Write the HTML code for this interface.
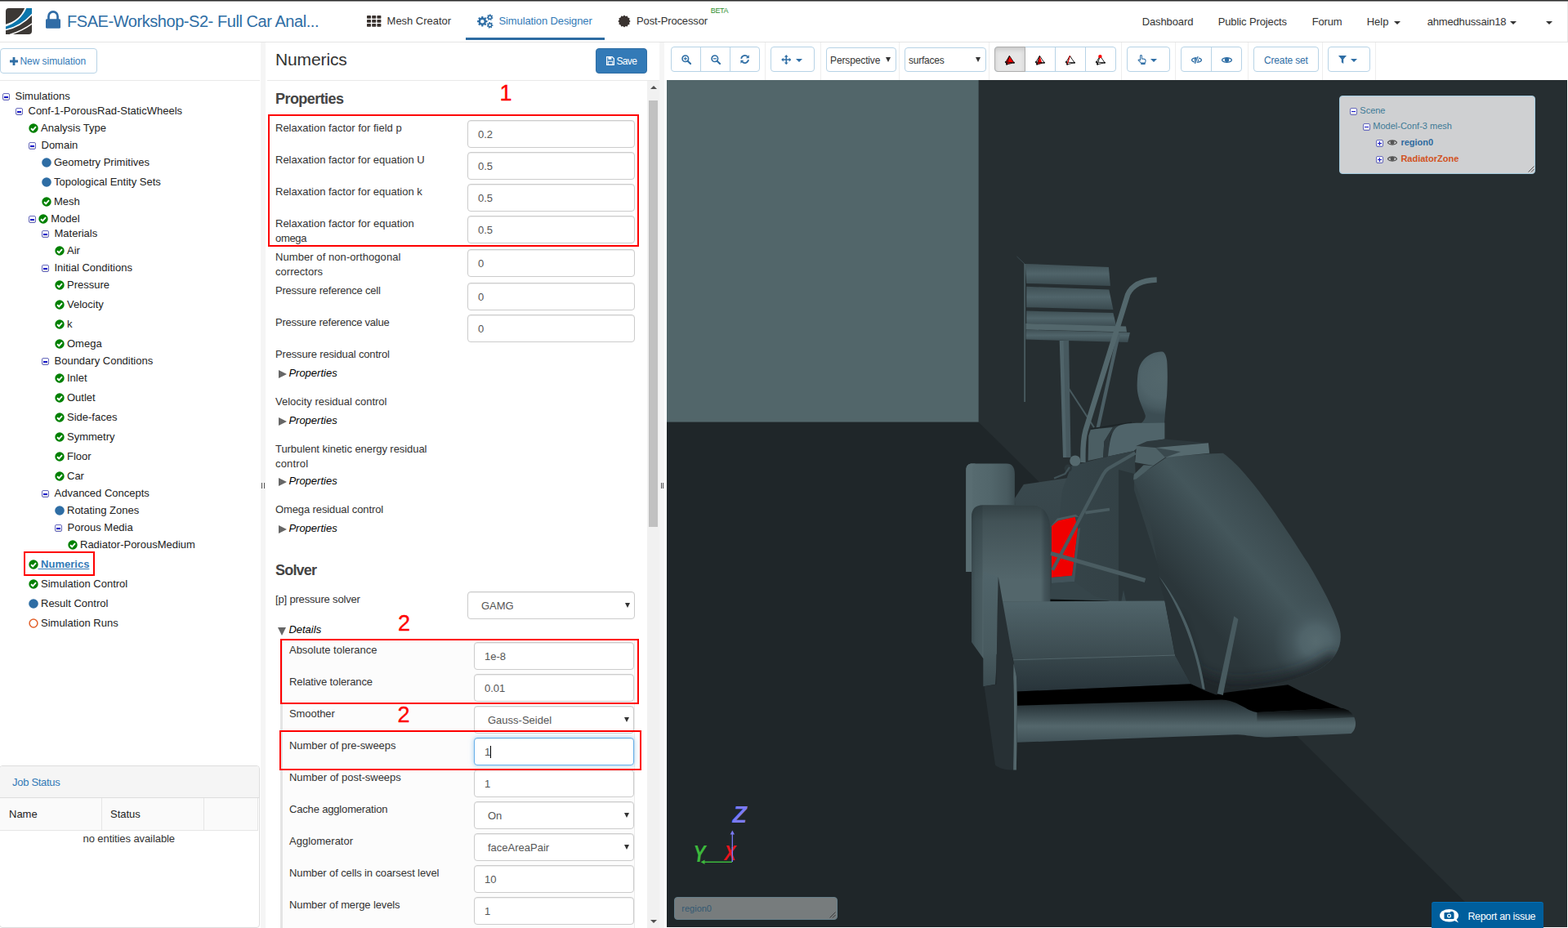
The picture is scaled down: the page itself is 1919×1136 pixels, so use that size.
<!DOCTYPE html><html><head><meta charset="utf-8"><title>SimScale Numerics</title><style>
*{box-sizing:border-box;margin:0;padding:0}
html,body{width:1919px;height:1136px;overflow:hidden;background:#fff}
body{font-family:"Liberation Sans",sans-serif;font-size:14px;color:#333;position:relative}
.abs{position:absolute}
.t{position:absolute;white-space:pre;line-height:20px}
.tr{font-size:13px;color:#222}
.btn{position:absolute;border:1px solid #b7d3e6;background:#fff;border-radius:4px}
.sep{position:absolute;top:52px;width:1px;height:46px;background:#eee}
.inp{position:absolute;height:34px;border:1px solid #ccc;border-radius:4px;background:#fff;box-shadow:inset 0 1px 1px rgba(0,0,0,.075);font-size:13px;color:#555;line-height:33px;padding-left:12px;white-space:pre}
.sel{padding-left:16px}
.sel:after{content:"";position:absolute;right:5.500px;top:12.500px;border-left:3.500px solid transparent;border-right:3.500px solid transparent;border-top:6.500px solid #333}
.lbl{position:absolute;line-height:18px;color:#333;white-space:pre}
.red{position:absolute;border:2px solid #fe0000}
.num{position:absolute;color:#fe0000;font-size:27px;line-height:28px;-webkit-text-stroke:.35px #fe0000}
.ex{position:absolute;width:9px;height:9px;border:1px solid #6669bb;border-radius:2px;background:linear-gradient(#fff 45%,#d8d8e0)}
.ex:before{content:"";position:absolute;left:1px;top:3px;width:5px;height:1.5px;background:#1515c8}
.ex.p:after{content:"";position:absolute;left:2.750px;top:1px;width:1.500px;height:5px;background:#1515c8}
</style></head><body><div class="abs" style="left:0;top:0;width:1919px;height:1px;background:#2e2e2e"></div><div class="abs" style="left:0;top:1px;width:1919px;height:1px;background:#8f8f8f"></div><div class="abs" style="left:0;top:51px;width:1919px;height:1px;background:#e4e4e4"></div><div class="abs" style="left:1918px;top:2px;width:1px;height:49px;background:#e7e7e7"></div><svg class="abs" style="left:7px;top:10px" width="32" height="32" viewBox="0 0 32 32">
<defs><clipPath id="lg"><path d="M3.8 0H32V28Q32 32 28 32H0V3.8Q0 0 3.8 0Z"/></clipPath></defs>
<g clip-path="url(#lg)"><rect width="32" height="32" fill="#3c3835"/>
<path d="M0 19.8Q17.45 14.5 23.1 0H32V8.900Q18.800 23.100 0 27.350Z" fill="#fff"/>
<path d="M0 22.500Q18.300 16.150 25.400 0H32V6.700Q18 21.750 0 25.800Z" fill="#0b76ac"/>
<path d="M5 32.400Q20 28 32.500 18.800" fill="none" stroke="#fff" stroke-width="1.500"/>
</g></svg><svg class="abs" style="left:56px;top:13px" width="18" height="22" viewBox="0 0 18 22">
<path d="M3.450 11V6.900a5.550 5.550 0 0 1 11.100 0V11" fill="none" stroke="#306ca6" stroke-width="2.700"/>
<rect x="0" y="10.200" width="18" height="11.600" rx="1.400" fill="#306ca6"/></svg><div class="t" style="left:82px;top:12.07px;font-size:20px;line-height:28px;color:#2f6ea5;"><span style="font-size:20px;letter-spacing:-0.443px;">FSAE-Workshop-S2- Full Car Anal...</span></div><svg class="abs" style="left:449px;top:18.5px" width="18" height="14" viewBox="0 0 18 14"><rect x="0.0" y="0.0" width="5" height="3.8" rx="0.7" fill="#3a3330"/><rect x="6.2" y="0.0" width="5" height="3.8" rx="0.7" fill="#3a3330"/><rect x="12.4" y="0.0" width="5" height="3.8" rx="0.7" fill="#3a3330"/><rect x="0.0" y="5.0" width="5" height="3.8" rx="0.7" fill="#3a3330"/><rect x="6.2" y="5.0" width="5" height="3.8" rx="0.7" fill="#3a3330"/><rect x="12.4" y="5.0" width="5" height="3.8" rx="0.7" fill="#3a3330"/><rect x="0.0" y="10.0" width="5" height="3.8" rx="0.7" fill="#3a3330"/><rect x="6.2" y="10.0" width="5" height="3.8" rx="0.7" fill="#3a3330"/><rect x="12.4" y="10.0" width="5" height="3.8" rx="0.7" fill="#3a3330"/></svg><div class="t" style="left:473.6px;top:15.50px;font-size:13px;color:#333;"><span style="font-size:13px;letter-spacing:-0.029px;">Mesh Creator</span></div><div class="abs" style="left:570px;top:46px;width:170px;height:3px;background:#2d6ca2"></div><svg class="abs" style="left:584px;top:17px" width="20" height="18" viewBox="0 0 20 18"><path d="M12.51,8.12 L12.51,10.28 L10.97,10.32 L10.39,11.71 L11.45,12.82 L9.92,14.35 L8.81,13.29 L7.42,13.87 L7.38,15.41 L5.22,15.41 L5.18,13.87 L3.79,13.29 L2.68,14.35 L1.15,12.82 L2.21,11.71 L1.63,10.32 L0.09,10.28 L0.09,8.12 L1.63,8.08 L2.21,6.69 L1.15,5.58 L2.68,4.05 L3.79,5.11 L5.18,4.53 L5.22,2.99 L7.38,2.99 L7.42,4.53 L8.81,5.11 L9.92,4.05 L11.45,5.58 L10.39,6.69 L10.97,8.08Z M8.60,9.2 a2.3,2.3 0 1,0 -4.6,0 a2.3,2.3 0 1,0 4.6,0Z" fill="#2f6ea5" fill-rule="evenodd"/><path d="M19.48,4.60 L19.03,6.06 L18.04,5.76 L17.34,6.52 L17.71,7.48 L16.28,8.04 L15.90,7.08 L14.87,7.01 L14.35,7.89 L13.02,7.13 L13.53,6.23 L12.95,5.38 L11.93,5.52 L11.70,4.01 L12.72,3.85 L13.03,2.86 L12.28,2.16 L13.32,1.04 L14.08,1.73 L15.04,1.35 L15.13,0.33 L16.65,0.44 L16.58,1.47 L17.48,1.99 L18.33,1.42 L19.19,2.68 L18.35,3.26 L18.50,4.29Z M16.90,4.2 a1.3,1.3 0 1,0 -2.6,0 a1.3,1.3 0 1,0 2.6,0Z" fill="#2f6ea5" fill-rule="evenodd"/><path d="M19.48,13.42 L19.33,14.94 L18.30,14.85 L17.76,15.73 L18.32,16.60 L17.03,17.43 L16.47,16.57 L15.44,16.70 L15.11,17.67 L13.66,17.18 L13.98,16.20 L13.24,15.48 L12.27,15.83 L11.74,14.39 L12.71,14.03 L12.81,13.00 L11.94,12.46 L12.74,11.15 L13.62,11.68 L14.49,11.12 L14.37,10.10 L15.88,9.91 L16.02,10.93 L17.00,11.26 L17.72,10.53 L18.82,11.60 L18.10,12.34 L18.46,13.31Z M16.90,13.8 a1.3,1.3 0 1,0 -2.6,0 a1.3,1.3 0 1,0 2.6,0Z" fill="#2f6ea5" fill-rule="evenodd"/></svg><div class="t" style="left:610.5px;top:15.50px;font-size:13px;color:#337ab7;"><span style="font-size:13px;letter-spacing:-0.118px;">Simulation Designer</span></div><svg class="abs" style="left:756px;top:17.5px" width="16" height="16" viewBox="0 0 16 16"><polygon points="15.60,8.00 14.09,9.63 14.58,11.80 12.45,12.45 11.80,14.58 9.63,14.09 8.00,15.60 6.37,14.09 4.20,14.58 3.55,12.45 1.42,11.80 1.91,9.63 0.40,8.00 1.91,6.37 1.42,4.20 3.55,3.55 4.20,1.42 6.37,1.91 8.00,0.40 9.63,1.91 11.80,1.42 12.45,3.55 14.58,4.20 14.09,6.37" fill="#3a3330"/></svg><div class="t" style="left:779px;top:15.50px;font-size:13px;color:#333;"><span style="font-size:13px;letter-spacing:-0.134px;">Post-Processor</span></div><div class="t" style="left:869.8px;top:6.88px;font-size:9px;line-height:12px;color:#2f8f2f;"><span style="font-size:9px;letter-spacing:-0.361px;">BETA</span></div><div class="t" style="left:1397.7px;top:16.50px;font-size:13px;color:#333;"><span style="font-size:13px;letter-spacing:-0.112px;">Dashboard</span></div><div class="t" style="left:1490.7px;top:16.50px;font-size:13px;color:#333;"><span style="font-size:13px;letter-spacing:-0.112px;">Public Projects</span></div><div class="t" style="left:1605.7px;top:16.50px;font-size:13px;color:#333;"><span style="font-size:13px;letter-spacing:-0.172px;">Forum</span></div><div class="t" style="left:1672.7px;top:16.50px;font-size:13px;color:#333;"><span style="font-size:13px;letter-spacing:-0.013px;">Help</span></div><div class="abs" style="left:1706px;top:26px;border-left:4px solid transparent;border-right:4px solid transparent;border-top:4px solid #333"></div><div class="abs" style="left:1848px;top:26px;border-left:4px solid transparent;border-right:4px solid transparent;border-top:4px solid #333"></div><div class="abs" style="left:1892px;top:26px;border-left:4px solid transparent;border-right:4px solid transparent;border-top:4px solid #333"></div><div class="t" style="left:1746.7px;top:16.50px;font-size:13px;color:#333;"><span style="font-size:13px;letter-spacing:-0.167px;">ahmedhussain18</span></div><div class="btn" style="left:0;top:59px;width:119px;height:31px"></div><svg class="abs" style="left:12px;top:69.5px" width="10" height="10" viewBox="0 0 10 10"><path d="M3.6 0h2.8v3.6H10v2.8H6.4V10H3.6V6.4H0V3.6h3.6z" fill="#2f6ea5"/></svg><div class="t" style="left:24.5px;top:64.84px;font-size:12px;color:#337ab7;"><span style="font-size:12px;letter-spacing:-0.062px;">New simulation</span></div><div class="abs" style="left:0;top:98px;width:318px;height:1px;background:#e9e9e9"></div><div class="ex" style="left:3px;top:114.0px"></div><div class="t" style="left:18.5px;top:107.50px;font-size:13px;color:#222;">Simulations</div><div class="ex" style="left:19px;top:132.0px"></div><div class="t" style="left:34.5px;top:125.50px;font-size:13px;color:#222;">Conf-1-PorousRad-StaticWheels</div><svg class="abs" style="left:34.8px;top:150.5px" width="12" height="12" viewBox="0 0 12 12"><circle cx="6" cy="6" r="5.7" fill="#008000"/><path d="M3 6.2 L5.2 8.3 L9 4.2" fill="none" stroke="#fff" stroke-width="1.9" stroke-linecap="butt"/></svg><div class="t" style="left:50px;top:146.50px;font-size:13px;color:#222;">Analysis Type</div><div class="ex" style="left:35px;top:174.0px"></div><div class="t" style="left:50.5px;top:167.50px;font-size:13px;color:#222;">Domain</div><svg class="abs" style="left:50.8px;top:192.5px" width="12" height="12" viewBox="0 0 12 12"><circle cx="6" cy="6" r="5.8" fill="#2e6da4"/></svg><div class="t" style="left:66px;top:188.50px;font-size:13px;color:#222;">Geometry Primitives</div><svg class="abs" style="left:50.8px;top:216.5px" width="12" height="12" viewBox="0 0 12 12"><circle cx="6" cy="6" r="5.8" fill="#2e6da4"/></svg><div class="t" style="left:66px;top:212.50px;font-size:13px;color:#222;">Topological Entity Sets</div><svg class="abs" style="left:50.8px;top:240.5px" width="12" height="12" viewBox="0 0 12 12"><circle cx="6" cy="6" r="5.7" fill="#008000"/><path d="M3 6.2 L5.2 8.3 L9 4.2" fill="none" stroke="#fff" stroke-width="1.9" stroke-linecap="butt"/></svg><div class="t" style="left:66px;top:236.50px;font-size:13px;color:#222;">Mesh</div><div class="ex" style="left:35px;top:264.0px"></div><svg class="abs" style="left:46.8px;top:261.5px" width="12" height="12" viewBox="0 0 12 12"><circle cx="6" cy="6" r="5.7" fill="#008000"/><path d="M3 6.2 L5.2 8.3 L9 4.2" fill="none" stroke="#fff" stroke-width="1.9" stroke-linecap="butt"/></svg><div class="t" style="left:62.2px;top:257.50px;font-size:13px;color:#222;">Model</div><div class="ex" style="left:51px;top:282.0px"></div><div class="t" style="left:66.5px;top:275.50px;font-size:13px;color:#222;">Materials</div><svg class="abs" style="left:66.8px;top:300.5px" width="12" height="12" viewBox="0 0 12 12"><circle cx="6" cy="6" r="5.7" fill="#008000"/><path d="M3 6.2 L5.2 8.3 L9 4.2" fill="none" stroke="#fff" stroke-width="1.9" stroke-linecap="butt"/></svg><div class="t" style="left:82px;top:296.50px;font-size:13px;color:#222;">Air</div><div class="ex" style="left:51px;top:324.0px"></div><div class="t" style="left:66.5px;top:317.50px;font-size:13px;color:#222;">Initial Conditions</div><svg class="abs" style="left:66.8px;top:342.5px" width="12" height="12" viewBox="0 0 12 12"><circle cx="6" cy="6" r="5.7" fill="#008000"/><path d="M3 6.2 L5.2 8.3 L9 4.2" fill="none" stroke="#fff" stroke-width="1.9" stroke-linecap="butt"/></svg><div class="t" style="left:82px;top:338.50px;font-size:13px;color:#222;">Pressure</div><svg class="abs" style="left:66.8px;top:366.5px" width="12" height="12" viewBox="0 0 12 12"><circle cx="6" cy="6" r="5.7" fill="#008000"/><path d="M3 6.2 L5.2 8.3 L9 4.2" fill="none" stroke="#fff" stroke-width="1.9" stroke-linecap="butt"/></svg><div class="t" style="left:82px;top:362.50px;font-size:13px;color:#222;">Velocity</div><svg class="abs" style="left:66.8px;top:390.5px" width="12" height="12" viewBox="0 0 12 12"><circle cx="6" cy="6" r="5.7" fill="#008000"/><path d="M3 6.2 L5.2 8.3 L9 4.2" fill="none" stroke="#fff" stroke-width="1.9" stroke-linecap="butt"/></svg><div class="t" style="left:82px;top:386.50px;font-size:13px;color:#222;">k</div><svg class="abs" style="left:66.8px;top:414.5px" width="12" height="12" viewBox="0 0 12 12"><circle cx="6" cy="6" r="5.7" fill="#008000"/><path d="M3 6.2 L5.2 8.3 L9 4.2" fill="none" stroke="#fff" stroke-width="1.9" stroke-linecap="butt"/></svg><div class="t" style="left:82px;top:410.50px;font-size:13px;color:#222;">Omega</div><div class="ex" style="left:51px;top:438.0px"></div><div class="t" style="left:66.5px;top:431.50px;font-size:13px;color:#222;">Boundary Conditions</div><svg class="abs" style="left:66.8px;top:456.5px" width="12" height="12" viewBox="0 0 12 12"><circle cx="6" cy="6" r="5.7" fill="#008000"/><path d="M3 6.2 L5.2 8.3 L9 4.2" fill="none" stroke="#fff" stroke-width="1.9" stroke-linecap="butt"/></svg><div class="t" style="left:82px;top:452.50px;font-size:13px;color:#222;">Inlet</div><svg class="abs" style="left:66.8px;top:480.5px" width="12" height="12" viewBox="0 0 12 12"><circle cx="6" cy="6" r="5.7" fill="#008000"/><path d="M3 6.2 L5.2 8.3 L9 4.2" fill="none" stroke="#fff" stroke-width="1.9" stroke-linecap="butt"/></svg><div class="t" style="left:82px;top:476.50px;font-size:13px;color:#222;">Outlet</div><svg class="abs" style="left:66.8px;top:504.5px" width="12" height="12" viewBox="0 0 12 12"><circle cx="6" cy="6" r="5.7" fill="#008000"/><path d="M3 6.2 L5.2 8.3 L9 4.2" fill="none" stroke="#fff" stroke-width="1.9" stroke-linecap="butt"/></svg><div class="t" style="left:82px;top:500.50px;font-size:13px;color:#222;">Side-faces</div><svg class="abs" style="left:66.8px;top:528.5px" width="12" height="12" viewBox="0 0 12 12"><circle cx="6" cy="6" r="5.7" fill="#008000"/><path d="M3 6.2 L5.2 8.3 L9 4.2" fill="none" stroke="#fff" stroke-width="1.9" stroke-linecap="butt"/></svg><div class="t" style="left:82px;top:524.50px;font-size:13px;color:#222;">Symmetry</div><svg class="abs" style="left:66.8px;top:552.5px" width="12" height="12" viewBox="0 0 12 12"><circle cx="6" cy="6" r="5.7" fill="#008000"/><path d="M3 6.2 L5.2 8.3 L9 4.2" fill="none" stroke="#fff" stroke-width="1.9" stroke-linecap="butt"/></svg><div class="t" style="left:82px;top:548.50px;font-size:13px;color:#222;">Floor</div><svg class="abs" style="left:66.8px;top:576.5px" width="12" height="12" viewBox="0 0 12 12"><circle cx="6" cy="6" r="5.7" fill="#008000"/><path d="M3 6.2 L5.2 8.3 L9 4.2" fill="none" stroke="#fff" stroke-width="1.9" stroke-linecap="butt"/></svg><div class="t" style="left:82px;top:572.50px;font-size:13px;color:#222;">Car</div><div class="ex" style="left:51px;top:600.0px"></div><div class="t" style="left:66.5px;top:593.50px;font-size:13px;color:#222;">Advanced Concepts</div><svg class="abs" style="left:66.8px;top:618.5px" width="12" height="12" viewBox="0 0 12 12"><circle cx="6" cy="6" r="5.8" fill="#2e6da4"/></svg><div class="t" style="left:82px;top:614.50px;font-size:13px;color:#222;">Rotating Zones</div><div class="ex" style="left:67px;top:642.0px"></div><div class="t" style="left:82.5px;top:635.50px;font-size:13px;color:#222;">Porous Media</div><svg class="abs" style="left:82.8px;top:660.5px" width="12" height="12" viewBox="0 0 12 12"><circle cx="6" cy="6" r="5.7" fill="#008000"/><path d="M3 6.2 L5.2 8.3 L9 4.2" fill="none" stroke="#fff" stroke-width="1.9" stroke-linecap="butt"/></svg><div class="t" style="left:98px;top:656.50px;font-size:13px;color:#222;">Radiator-PorousMedium</div><svg class="abs" style="left:34.8px;top:684.5px" width="12" height="12" viewBox="0 0 12 12"><circle cx="6" cy="6" r="5.7" fill="#008000"/><path d="M3 6.2 L5.2 8.3 L9 4.2" fill="none" stroke="#fff" stroke-width="1.9" stroke-linecap="butt"/></svg><div class="t" style="left:46.5px;top:680.50px;font-size:13px;color:#337ab7;font-weight:bold;text-decoration:underline;">&nbsp;Numerics</div><svg class="abs" style="left:34.8px;top:708.5px" width="12" height="12" viewBox="0 0 12 12"><circle cx="6" cy="6" r="5.7" fill="#008000"/><path d="M3 6.2 L5.2 8.3 L9 4.2" fill="none" stroke="#fff" stroke-width="1.9" stroke-linecap="butt"/></svg><div class="t" style="left:50px;top:704.50px;font-size:13px;color:#222;">Simulation Control</div><svg class="abs" style="left:34.8px;top:732.5px" width="12" height="12" viewBox="0 0 12 12"><circle cx="6" cy="6" r="5.8" fill="#2e6da4"/></svg><div class="t" style="left:50px;top:728.50px;font-size:13px;color:#222;">Result Control</div><svg class="abs" style="left:34.8px;top:756.5px" width="12" height="12" viewBox="0 0 12 12"><circle cx="6" cy="6" r="4.9" fill="#fff" stroke="#e2602a" stroke-width="1.5"/></svg><div class="t" style="left:50px;top:752.50px;font-size:13px;color:#222;">Simulation Runs</div><div class="red" style="left:29px;top:675.300px;width:87px;height:29.500px"></div><div class="abs" style="left:319px;top:52px;width:6px;height:1084px;background:#f5f5f5"></div><div class="abs" style="left:320.300px;top:591px;width:1px;height:7px;background:#555"></div><div class="abs" style="left:322.900px;top:591px;width:1px;height:7px;background:#555"></div><div class="abs" style="left:-1px;top:937px;width:319px;height:199px;border:1px solid #ddd;border-radius:4px;background:#fff"></div><div class="abs" style="left:0;top:938px;width:317px;height:38px;background:#f5f5f5;border-radius:3px 3px 0 0"></div><div class="abs" style="left:0;top:976px;width:317px;height:1px;background:#ddd"></div><div class="t" style="left:15px;top:947.50px;font-size:13px;color:#337ab7;"><span style="font-size:13px;letter-spacing:-0.294px;">Job Status</span></div><div class="abs" style="left:0;top:977px;width:316px;height:40px;background:#fafafa;border-bottom:1px solid #e6e6e6;border-right:1px solid #e6e6e6"></div><div class="abs" style="left:124px;top:977px;width:1px;height:40px;background:#e6e6e6"></div><div class="abs" style="left:249px;top:977px;width:1px;height:40px;background:#e6e6e6"></div><div class="t" style="left:11px;top:986.50px;font-size:13px;color:#222;">Name</div><div class="t" style="left:135px;top:986.50px;font-size:13px;color:#222;">Status</div><div class="t" style="left:101.5px;top:1016.50px;font-size:13px;color:#333;"><span style="font-size:13px;letter-spacing:-0.081px;">no entities available</span></div><div class="t" style="left:337px;top:57.72px;font-size:21px;line-height:30px;color:#333;"><span style="font-size:21px;letter-spacing:-0.121px;">Numerics</span></div><div class="abs" style="left:729px;top:59px;width:63px;height:31px;background:#337ab7;border:1px solid #2e6da4;border-radius:4px"></div><svg class="abs" style="left:742px;top:69px" width="10" height="11" viewBox="0 0 10 11"><path d="M0.6 0.6h6.6l2.2 2.2v7.6h-8.8z" fill="none" stroke="#fff" stroke-width="1.2"/><rect x="2.4" y="0.8" width="4" height="3" fill="#fff"/><rect x="2.2" y="6.2" width="5.6" height="4" fill="none" stroke="#fff" stroke-width="1"/></svg><div class="t" style="left:754.5px;top:64.84px;font-size:12px;color:#fff;"><span style="font-size:12px;letter-spacing:-0.684px;">Save</span></div><div class="abs" style="left:327px;top:98px;width:480px;height:1px;background:#e9e9e9"></div><div class="abs" style="left:792px;top:99px;width:15px;height:1037px;background:#f1f1f1"></div><div class="abs" style="left:794px;top:123px;width:11px;height:522px;background:#c1c1c1"></div><div class="abs" style="left:795.500px;top:104.800px;border-left:4px solid transparent;border-right:4px solid transparent;border-bottom:4.500px solid #505050"></div><div class="abs" style="left:795.500px;top:1126px;border-left:4px solid transparent;border-right:4px solid transparent;border-top:4.500px solid #505050"></div><div class="abs" style="left:807px;top:52px;width:6px;height:1084px;background:#f5f5f5"></div><div class="abs" style="left:809px;top:591px;width:1px;height:7px;background:#555"></div><div class="abs" style="left:811.300px;top:591px;width:1px;height:7px;background:#555"></div><div class="t" style="left:337px;top:108.36px;font-size:18px;line-height:26px;color:#444;font-weight:700;"><span style="font-size:18px;letter-spacing:-0.559px;font-weight:700;">Properties</span></div><div class="lbl" style="left:337px;top:147px"><span style="font-size:13px;letter-spacing:0.001px;">Relaxation factor for field p</span></div><div class="inp" style="left:572px;top:147px;width:205px;">0.2</div><div class="lbl" style="left:337px;top:186px"><span style="font-size:13px;letter-spacing:-0.004px;">Relaxation factor for equation U</span></div><div class="inp" style="left:572px;top:186px;width:205px;">0.5</div><div class="lbl" style="left:337px;top:225px"><span style="font-size:13px;letter-spacing:-0.006px;">Relaxation factor for equation k</span></div><div class="inp" style="left:572px;top:225px;width:205px;">0.5</div><div class="lbl" style="left:337px;top:264px"><span style="font-size:13px;letter-spacing:-0.001px;">Relaxation factor for equation</span></div><div class="lbl" style="left:337px;top:282px"><span style="font-size:13px;letter-spacing:-0.319px;">omega</span></div><div class="inp" style="left:572px;top:264px;width:205px;">0.5</div><div class="lbl" style="left:337px;top:305px"><span style="font-size:13px;letter-spacing:0.070px;">Number of non-orthogonal</span></div><div class="lbl" style="left:337px;top:323px"><span style="font-size:13px;letter-spacing:0.027px;">correctors</span></div><div class="inp" style="left:572px;top:305px;width:205px;">0</div><div class="lbl" style="left:337px;top:346px"><span style="font-size:13px;letter-spacing:-0.220px;">Pressure reference cell</span></div><div class="inp" style="left:572px;top:346px;width:205px;">0</div><div class="lbl" style="left:337px;top:385px"><span style="font-size:13px;letter-spacing:-0.243px;">Pressure reference value</span></div><div class="inp" style="left:572px;top:385px;width:205px;">0</div><div class="lbl" style="left:337px;top:424px"><span style="font-size:13px;letter-spacing:-0.158px;">Pressure residual control</span></div><div class="abs" style="left:341px;top:452.7px;border-top:5.500px solid transparent;border-bottom:5.500px solid transparent;border-left:10px solid #666"></div><div class="t" style="left:353.4px;top:446.80px;font-size:13px;color:#000;font-style:italic;">Properties</div><div class="lbl" style="left:337px;top:482px"><span style="font-size:13px;letter-spacing:-0.004px;">Velocity residual control</span></div><div class="abs" style="left:341px;top:510.7px;border-top:5.500px solid transparent;border-bottom:5.500px solid transparent;border-left:10px solid #666"></div><div class="t" style="left:353.4px;top:504.80px;font-size:13px;color:#000;font-style:italic;">Properties</div><div class="lbl" style="left:337px;top:540px"><span style="font-size:13px;letter-spacing:-0.060px;">Turbulent kinetic energy residual</span></div><div class="lbl" style="left:337px;top:558px"><span style="font-size:13px;letter-spacing:0.167px;">control</span></div><div class="abs" style="left:341px;top:584.9px;border-top:5.500px solid transparent;border-bottom:5.500px solid transparent;border-left:10px solid #666"></div><div class="t" style="left:353.4px;top:579.00px;font-size:13px;color:#000;font-style:italic;">Properties</div><div class="lbl" style="left:337px;top:614px"><span style="font-size:13px;letter-spacing:-0.107px;">Omega residual control</span></div><div class="abs" style="left:341px;top:642.9px;border-top:5.500px solid transparent;border-bottom:5.500px solid transparent;border-left:10px solid #666"></div><div class="t" style="left:353.4px;top:637.00px;font-size:13px;color:#000;font-style:italic;">Properties</div><div class="t" style="left:337px;top:685.26px;font-size:18px;line-height:26px;color:#444;font-weight:700;"><span style="font-size:18px;letter-spacing:-0.805px;font-weight:700;">Solver</span></div><div class="lbl" style="left:337px;top:724px"><span style="font-size:13px;letter-spacing:-0.168px;">[p] pressure solver</span></div><div class="inp sel" style="left:572px;top:724px;width:205px;">GAMG</div><div class="abs" style="left:339.8px;top:767.8px;border-left:5.650px solid transparent;border-right:5.650px solid transparent;border-top:10.200px solid #666"></div><div class="t" style="left:353.4px;top:760.80px;font-size:13px;color:#000;font-style:italic;">Details</div><div class="abs" style="left:343px;top:783px;width:434px;height:360px;background:#fcfcfc;border-left:3px solid #e4e4e4;border-right:1px solid #ececec"></div><div class="lbl" style="left:354px;top:786px"><span style="font-size:13px;letter-spacing:-0.015px;">Absolute tolerance</span></div><div class="inp" style="left:580px;top:786px;width:196px;">1e-8</div><div class="lbl" style="left:354px;top:825px"><span style="font-size:13px;letter-spacing:-0.115px;">Relative tolerance</span></div><div class="inp" style="left:580px;top:825px;width:196px;">0.01</div><div class="lbl" style="left:354px;top:864px"><span style="font-size:13px;letter-spacing:-0.078px;">Smoother</span></div><div class="inp sel" style="left:580px;top:864px;width:196px;">Gauss-Seidel</div><div class="lbl" style="left:354px;top:903px"><span style="font-size:13px;letter-spacing:-0.055px;">Number of pre-sweeps</span></div><div class="inp" style="left:580px;top:903px;width:196px;border-color:#66afe9;box-shadow:inset 0 1px 1px rgba(0,0,0,.075),0 0 6px rgba(102,175,233,.6);">1<span style="display:inline-block;width:1px;height:15px;background:#000;vertical-align:-3px;margin-left:0px"></span></div><div class="lbl" style="left:354px;top:942px"><span style="font-size:13px;letter-spacing:-0.026px;">Number of post-sweeps</span></div><div class="inp" style="left:580px;top:942px;width:196px;">1</div><div class="lbl" style="left:354px;top:981px"><span style="font-size:13px;letter-spacing:-0.168px;">Cache agglomeration</span></div><div class="inp sel" style="left:580px;top:981px;width:196px;">On</div><div class="lbl" style="left:354px;top:1020px"><span style="font-size:13px;letter-spacing:-0.001px;">Agglomerator</span></div><div class="inp sel" style="left:580px;top:1020px;width:196px;">faceAreaPair</div><div class="lbl" style="left:354px;top:1059px"><span style="font-size:13px;letter-spacing:-0.117px;">Number of cells in coarsest level</span></div><div class="inp" style="left:580px;top:1059px;width:196px;">10</div><div class="lbl" style="left:354px;top:1098px"><span style="font-size:13px;letter-spacing:-0.117px;">Number of merge levels</span></div><div class="inp" style="left:580px;top:1098px;width:196px;">1</div><div class="red" style="left:328px;top:140px;width:454px;height:162px"></div><div class="num" style="left:611.500px;top:100.300px">1</div><div class="red" style="left:343px;top:782px;width:439px;height:80px"></div><div class="num" style="left:487px;top:749.300px">2</div><div class="red" style="left:342px;top:894px;width:443px;height:48.500px"></div><div class="num" style="left:486.500px;top:861.300px">2</div><div class="sep" style="left:936px"></div><div class="sep" style="left:1004px"></div><div class="sep" style="left:1100px"></div><div class="sep" style="left:1210px"></div><div class="sep" style="left:1372px"></div><div class="sep" style="left:1438px"></div><div class="sep" style="left:1527px"></div><div class="sep" style="left:1618px"></div><div class="sep" style="left:1683px"></div><div class="btn" style="left:821px;top:57px;width:109px;height:31px"></div><div class="abs" style="left:857px;top:58px;width:1px;height:29px;background:#b7d3e6"></div><div class="abs" style="left:893px;top:58px;width:1px;height:29px;background:#b7d3e6"></div><svg class="abs" style="left:833.7px;top:67.2px" width="12" height="12" viewBox="0 0 13 13"><circle cx="5.2" cy="5.2" r="4.1" fill="none" stroke="#2f6ea5" stroke-width="1.7"/><path d="M8.3 8.3L12 12" stroke="#2f6ea5" stroke-width="2.2" stroke-linecap="round"/><path d="M3 5.2h4.4" stroke="#2f6ea5" stroke-width="1.3"/><path d="M5.2 3v4.4" stroke="#2f6ea5" stroke-width="1.3"/></svg><svg class="abs" style="left:869.7px;top:67.2px" width="12" height="12" viewBox="0 0 13 13"><circle cx="5.2" cy="5.2" r="4.1" fill="none" stroke="#2f6ea5" stroke-width="1.7"/><path d="M8.3 8.3L12 12" stroke="#2f6ea5" stroke-width="2.2" stroke-linecap="round"/><path d="M3 5.2h4.4" stroke="#2f6ea5" stroke-width="1.3"/></svg><svg class="abs" style="left:905.800px;top:67.200px" width="11.200" height="11" viewBox="0 0 12 12"><path d="M1.2 5.2A4.9 4.9 0 0 1 9.6 2.6" fill="none" stroke="#2f6ea5" stroke-width="1.9"/><path d="M11.6 0.4V4.6H7.4Z" fill="#2f6ea5"/><path d="M10.8 6.8A4.9 4.9 0 0 1 2.4 9.4" fill="none" stroke="#2f6ea5" stroke-width="1.9"/><path d="M0.4 11.6V7.4H4.6Z" fill="#2f6ea5"/></svg><div class="btn" style="left:943px;top:57px;width:54px;height:31px"></div><svg class="abs" style="left:955.800px;top:66.800px" width="12.500" height="12.200" viewBox="0 0 13 13"><path d="M6.5 0L9 2.8H7.3V5.7H10.2V4L13 6.5L10.2 9V7.3H7.3V10.2H9L6.5 13L4 10.2H5.7V7.3H2.8V9L0 6.5L2.8 4V5.7H5.7V2.8H4Z" fill="#2f6ea5"/></svg><div class="abs" style="left:973.5px;top:72px;border-left:4px solid transparent;border-right:4px solid transparent;border-top:4px solid #2f6ea5"></div><div class="btn" style="left:1011px;top:58px;width:86px;height:30px;border-radius:4px"></div><div class="t" style="left:1016px;top:63.84px;font-size:12px;color:#333;"><span style="font-size:12px;letter-spacing:-0.128px;">Perspective</span></div><div class="abs" style="left:1083.700px;top:70px;border-left:3.500px solid transparent;border-right:3.500px solid transparent;border-top:6px solid #333"></div><div class="btn" style="left:1107px;top:58px;width:100px;height:30px;border-radius:4px"></div><div class="t" style="left:1112px;top:63.84px;font-size:12px;color:#333;"><span style="font-size:12px;letter-spacing:-0.227px;">surfaces</span></div><div class="abs" style="left:1193.700px;top:70px;border-left:3.500px solid transparent;border-right:3.500px solid transparent;border-top:6px solid #333"></div><div class="btn" style="left:1217px;top:57px;width:149px;height:31px"></div><div class="abs" style="left:1217px;top:57px;width:38px;height:31px;background:#e6e6e6;border:1px solid #adadad;border-radius:4px 0 0 4px;box-shadow:inset 0 3px 5px rgba(0,0,0,.125)"></div><div class="abs" style="left:1291px;top:58px;width:1px;height:29px;background:#b7d3e6"></div><div class="abs" style="left:1328px;top:58px;width:1px;height:29px;background:#b7d3e6"></div><svg class="abs" style="left:1229px;top:66px" width="14" height="14" viewBox="0 0 14 14"><polygon points="6.4,2.3 1.8,10 3.1,12.8 12,10.8" fill="#f00"/><path d="M6.4 2.3L1.8 10" stroke="#111" stroke-width="0.9"/><path d="M6.4 2.3L12 10.8" stroke="#111" stroke-width="0.9"/><path d="M6.4 2.3L3.1 12.8" stroke="#111" stroke-width="0.9"/><path d="M1.8 10L3.1 12.8" stroke="#111" stroke-width="0.9"/><path d="M3.1 12.8L12 10.8" stroke="#111" stroke-width="0.9"/><path d="M1.8 10L12 10.8" stroke="#111" stroke-width="0.9"/><circle cx="1.8" cy="10" r="1" fill="#111"/><circle cx="12" cy="10.8" r="1" fill="#111"/><circle cx="3.1" cy="12.8" r="1" fill="#111"/></svg><svg class="abs" style="left:1266px;top:66px" width="14" height="14" viewBox="0 0 14 14"><polygon points="6.4,2.3 3.1,12.8 9.5,11.600000000000001" fill="#f00"/><path d="M6.4 2.3L1.8 10" stroke="#111" stroke-width="0.9"/><path d="M6.4 2.3L12 10.8" stroke="#111" stroke-width="0.9"/><path d="M6.4 2.3L3.1 12.8" stroke="#111" stroke-width="0.9"/><path d="M1.8 10L3.1 12.8" stroke="#111" stroke-width="0.9"/><path d="M3.1 12.8L12 10.8" stroke="#111" stroke-width="0.9"/><path d="M1.8 10L12 10.8" stroke="#111" stroke-width="0.9"/><circle cx="1.8" cy="10" r="1" fill="#111"/><circle cx="12" cy="10.8" r="1" fill="#111"/><circle cx="3.1" cy="12.8" r="1" fill="#111"/></svg><svg class="abs" style="left:1303px;top:66px" width="14" height="14" viewBox="0 0 14 14"><path d="M6.4 2.3L1.8 10" stroke="#111" stroke-width="0.9"/><path d="M6.4 2.3L12 10.8" stroke="#111" stroke-width="0.9"/><path d="M6.4 2.3L3.1 12.8" stroke="#111" stroke-width="0.9"/><path d="M1.8 10L3.1 12.8" stroke="#111" stroke-width="0.9"/><path d="M3.1 12.8L12 10.8" stroke="#111" stroke-width="0.9"/><path d="M1.8 10L12 10.8" stroke="#111" stroke-width="0.9"/><path d="M6.4 2.3L3.1 12.8" stroke="#f00" stroke-width="1.0"/><circle cx="1.8" cy="10" r="1" fill="#111"/><circle cx="12" cy="10.8" r="1" fill="#111"/><circle cx="3.1" cy="12.8" r="1" fill="#111"/></svg><svg class="abs" style="left:1340px;top:66px" width="14" height="14" viewBox="0 0 14 14"><path d="M6.4 2.3L1.8 10" stroke="#111" stroke-width="0.9"/><path d="M6.4 2.3L12 10.8" stroke="#111" stroke-width="0.9"/><path d="M6.4 2.3L3.1 12.8" stroke="#111" stroke-width="0.9"/><path d="M1.8 10L3.1 12.8" stroke="#111" stroke-width="0.9"/><path d="M3.1 12.8L12 10.8" stroke="#111" stroke-width="0.9"/><path d="M1.8 10L12 10.8" stroke="#111" stroke-width="0.9"/><circle cx="1.8" cy="10" r="1" fill="#111"/><circle cx="12" cy="10.8" r="1" fill="#111"/><circle cx="3.1" cy="12.8" r="1" fill="#111"/><circle cx="6.4" cy="3.0999999999999996" r="2.2" fill="#f00"/></svg><div class="btn" style="left:1379px;top:57px;width:53px;height:31px"></div><svg class="abs" style="left:1391.600px;top:66.800px" width="11.600" height="12.200" viewBox="0 0 12 13"><path d="M3.6 7.2V1.6a1 1 0 0 1 2 0V5.2c1.6 0 5 .2 5 2.6 0 1.2-.6 2-.8 3H4.6C4 9.600 1.200 8 1 7c-.2-1 1.400-.8 2.600.2Z" fill="#fff" stroke="#2f6ea5" stroke-width="1.1" stroke-linejoin="round"/><rect x="4.4" y="10.8" width="5.6" height="2.2" fill="#2f6ea5"/></svg><div class="abs" style="left:1408.2px;top:72px;border-left:4px solid transparent;border-right:4px solid transparent;border-top:4px solid #2f6ea5"></div><div class="btn" style="left:1445px;top:57px;width:75px;height:31px"></div><div class="abs" style="left:1482px;top:58px;width:1px;height:29px;background:#b7d3e6"></div><svg class="abs" style="left:1458px;top:68.5px" width="13" height="9" viewBox="0 0 13 9"><path d="M0.3 4.5C2.5 0.9 10.5 0.9 12.7 4.5C10.5 8.1 2.5 8.1 0.3 4.5Z" fill="none" stroke="#2f6ea5" stroke-width="1.4"/><circle cx="6.5" cy="4.3" r="2.7" fill="#2f6ea5"/><path d="M8.8 -0.5L4.6 9.5" stroke="#fff" stroke-width="2.6"/><path d="M8.2 0L4.4 9" stroke="#2f6ea5" stroke-width="1.2"/></svg><svg class="abs" style="left:1494.8px;top:68.5px" width="13" height="9" viewBox="0 0 13 9"><path d="M0.3 4.5C2.5 0.9 10.5 0.9 12.7 4.5C10.5 8.1 2.5 8.1 0.3 4.5Z" fill="none" stroke="#2f6ea5" stroke-width="1.4"/><circle cx="6.5" cy="4.3" r="2.7" fill="#2f6ea5"/></svg><div class="btn" style="left:1534px;top:57px;width:80px;height:31px"></div><div class="t" style="left:1547px;top:63.84px;font-size:12px;color:#2f6ea5;"><span style="font-size:12px;letter-spacing:-0.156px;">Create set</span></div><div class="btn" style="left:1625px;top:57px;width:52px;height:31px"></div><svg class="abs" style="left:1637.5px;top:67.5px" width="10" height="10" viewBox="0 0 10 10"><path d="M0 0H10L6.200 4.600V10L3.800 8.200V4.600Z" fill="#2f6ea5"/></svg><div class="abs" style="left:1653px;top:72px;border-left:4px solid transparent;border-right:4px solid transparent;border-top:4px solid #2f6ea5"></div><svg class="abs" style="left:816px;top:98px" width="1102" height="1036.700" viewBox="816 98 1102 1036.700"><rect x="816" y="98" width="1102" height="1037" fill="#262e31"/><rect x="816" y="98" width="381.600" height="418.800" fill="#52666a"/><polygon points="816,516.800 1197.600,516.800 1824.300,1135 816,1135" fill="#1f2629"/><defs>
<linearGradient id="gw" x1="0" y1="0" x2="0" y2="1"><stop offset="0" stop-color="#3f5055"/><stop offset=".45" stop-color="#50646a"/><stop offset="1" stop-color="#3a4a4f"/></linearGradient>
<linearGradient id="gwheel" x1="0" y1="0" x2="1" y2="0"><stop offset="0" stop-color="#3c4b50"/><stop offset=".05" stop-color="#44565b"/><stop offset=".13" stop-color="#495b60"/><stop offset=".15" stop-color="#53666b"/><stop offset=".88" stop-color="#53666b"/><stop offset=".93" stop-color="#43545a"/><stop offset="1" stop-color="#3a494e"/></linearGradient>
<linearGradient id="gwheelv" x1="0" y1="0" x2="0" y2="1"><stop offset="0" stop-color="#1a2326" stop-opacity=".55"/><stop offset=".12" stop-color="#1a2326" stop-opacity=".3"/><stop offset=".55" stop-color="#1a2326" stop-opacity="0"/></linearGradient>
<linearGradient id="grw" x1="0" y1="0" x2="1" y2="0"><stop offset="0" stop-color="#586c71"/><stop offset=".5" stop-color="#52666b"/><stop offset=".85" stop-color="#485a5f"/><stop offset="1" stop-color="#3c4c51"/></linearGradient>
<linearGradient id="gflap1" x1="0" y1="0" x2="0" y2="1"><stop offset="0" stop-color="#50646a"/><stop offset="1" stop-color="#3a494e"/></linearGradient>
<linearGradient id="gflap2" x1="0" y1="0" x2="0" y2="1"><stop offset="0" stop-color="#38474c"/><stop offset="1" stop-color="#28343a"/></linearGradient>
<linearGradient id="gmain" x1="0" y1="0" x2="0" y2="1"><stop offset="0" stop-color="#1e2629"/><stop offset=".25" stop-color="#334146"/><stop offset=".62" stop-color="#54676c"/><stop offset="1" stop-color="#3f5056"/></linearGradient>
<linearGradient id="gnose" x1="0" y1="0" x2="1" y2="1" gradientUnits="userSpaceOnUse" ><stop offset="0" stop-color="#3b4a4e"/><stop offset="1" stop-color="#3b4a4e"/></linearGradient>
<linearGradient id="gnose2" x1="1440" y1="720" x2="1576" y2="602" gradientUnits="userSpaceOnUse"><stop offset="0" stop-color="#2b363a"/><stop offset=".3" stop-color="#38474c"/><stop offset=".51" stop-color="#44565b"/><stop offset=".7" stop-color="#3e4e53"/><stop offset=".86" stop-color="#38474b"/><stop offset="1" stop-color="#364448"/></linearGradient>
<radialGradient id="gtip" cx="1610" cy="785" r="52" gradientUnits="userSpaceOnUse"><stop offset="0" stop-color="#566a6f"/><stop offset=".35" stop-color="#50646a" stop-opacity=".95"/><stop offset=".6" stop-color="#485a60" stop-opacity=".6"/><stop offset="1" stop-color="#42545a" stop-opacity="0"/></radialGradient>
<radialGradient id="ghead" cx="1422" cy="462" r="46" gradientUnits="userSpaceOnUse"><stop offset="0" stop-color="#53676c"/><stop offset=".55" stop-color="#50646a"/><stop offset=".8" stop-color="#485b61"/><stop offset="1" stop-color="#3c4d53"/></radialGradient>
<linearGradient id="gbody" x1="0" y1="0" x2="1" y2="0"><stop offset="0" stop-color="#36454a"/><stop offset="1" stop-color="#303c40"/></linearGradient>
<linearGradient id="gpod" x1="0" y1="0" x2="0" y2="1"><stop offset="0" stop-color="#3a494e"/><stop offset="1" stop-color="#323f44"/></linearGradient>
<linearGradient id="gnosebot" x1="0" y1="775" x2="0" y2="845" gradientUnits="userSpaceOnUse"><stop offset="0" stop-color="#1c2427" stop-opacity="0"/><stop offset=".6" stop-color="#1c2427" stop-opacity=".45"/><stop offset="1" stop-color="#1c2427" stop-opacity=".8"/></linearGradient>
<linearGradient id="gblk" x1="0" y1="0" x2="0" y2="1"><stop offset="0" stop-color="#000" stop-opacity=".9"/><stop offset="1" stop-color="#000" stop-opacity="0"/></linearGradient>
<linearGradient id="gepl" x1="0" y1="0" x2="0" y2="1"><stop offset="0" stop-color="#50646a"/><stop offset=".7" stop-color="#485a5f"/><stop offset="1" stop-color="#3c4c51"/></linearGradient>
<filter id="fb" x="-20%" y="-20%" width="140%" height="140%"><feGaussianBlur stdDeviation="7"/></filter>
</defs><path d="M1244.5 314L1254.500 323.500" stroke="#3a494e" stroke-width="1"/><rect x="1253.200" y="323" width="1.800" height="169" fill="#495b60"/><polygon points="1254.800,322.900 1356.900,327 1358.900,349.900 1256.200,346.900" fill="url(#gw)"/><polygon points="1256.200,350.800 1357.300,354.500 1362.400,379 1256.200,376.200" fill="url(#gw)"/><polygon points="1256.200,380.600 1362.400,382.900 1366.500,400.700 1256.200,396.100" fill="url(#gw)"/><polygon points="1255.500,396.100 1378,399.600 1379,406.400 1255.500,403.500" fill="#53676c"/><polygon points="1255.500,403.500 1383,407.100 1380.200,419 1255.500,415.600" fill="url(#gw)"/><polygon points="1296.700,417 1302,417 1306,560 1301,560" fill="#50646a"/><polygon points="1301.500,417 1308.100,417 1310.500,560 1305,560" fill="#47595f"/><path d="M1304.700 470.500L1339 523.200" stroke="#485a5f" stroke-width="2"/><path d="M1368.800 409.900L1343.600 524" stroke="#4b5e64" stroke-width="4.200"/><path d="M1415.700 342.500C1396 343 1385.500 349 1380.200 360.500L1328.500 527C1325.500 538 1325 548 1325.500 566" fill="none" stroke="#53676c" stroke-width="6.400"/><path d="M1422.800 430.600C1425.500 431.500 1427.500 436 1428.200 442C1429 452 1429 470 1428.100 484L1426 505L1425 518L1397 518C1400.500 514.600 1402.500 511 1401.700 508.300C1400.800 505 1396.500 496 1394.300 489.300C1392 482 1391.500 476 1391.700 470C1392 462 1392.500 456 1393.500 452C1396 443 1402 436 1410.200 432.700C1414.500 431 1419 430 1422.800 430.600Z" fill="url(#ghead)"/><polygon points="1334.900,525.700 1362,523 1351.400,540.200 1350.100,560 1331.600,564 1332.300,533.600" fill="#4b5e63"/><path d="M1334.900 525.200L1385.100 517.200" stroke="#1c2326" stroke-width="1.200"/><polygon points="1362,523 1368,521 1358.700,533.600 1356,558.700 1350.100,560 1351.400,540.200" fill="#2d383c"/><path d="M1400 518C1392 517.500 1376 518 1368.500 521.500C1360 527 1358.500 538 1356 558.700L1387.700 552.100C1392 548 1400 541.500 1425.400 537.500V517.500Z" fill="#50646a"/><path d="M1182.300 700V576C1182.300 570 1185 567.600 1190 567.600H1232C1238.500 567.600 1241.900 572 1241.900 580V640H1200V700Z" fill="url(#grw)"/><path d="M1190 700V576C1190 571 1191 568.500 1194 567.600H1190C1185 567.600 1182.300 570 1182.300 576V700Z" fill="#596d72"/><polygon points="1241.900,610 1252.800,593 1311.100,584.500 1328.200,592.600 1369,640 1369,740 1290,740 1243,640" fill="url(#gpod)"/><polygon points="1311.100,570.600 1356,558.700 1388.400,552.100 1390,588 1428.700,559.300 1480,555.400 1480,740 1284,740 1300,600" fill="url(#gbody)"/><polygon points="1369,560 1390,552.500 1392,590 1430,640 1440,740 1369,740" fill="#29343800"/><polygon points="1369,575 1388,580 1388,600 1420,700 1425,740 1369,740" fill="#2a3539"/><circle cx="1307.200" cy="573.200" r="4.600" fill="#2c373b"/><circle cx="1315.800" cy="564" r="6.600" fill="#566a6f"/><path d="M1290 585.500L1303.500 580L1309 572" stroke="#405156" stroke-width="2.200" fill="none"/><path d="M1387.100 587.100L1428.700 559.300L1480.200 555.400L1496.800 554.800C1525 575 1560 625 1601.300 690.300C1620 722 1636 752 1640 771.600C1643 790 1636 805 1616.800 818.100C1600 828 1560 841 1516.100 843.300C1495 842 1470 835 1455 822L1425 740L1408 640Z" fill="url(#gnose2)"/><clipPath id="cn"><path d="M1387.100 587.100L1428.700 559.300L1480.200 555.400L1496.800 554.800C1525 575 1560 625 1601.300 690.300C1620 722 1636 752 1640 771.600C1643 790 1636 805 1616.800 818.100C1600 828 1560 841 1516.100 843.300C1495 842 1470 835 1455 822L1425 740L1408 640Z"/></clipPath><circle cx="1610" cy="785" r="52" fill="url(#gtip)" clip-path="url(#cn)"/><g clip-path="url(#cn)"><path d="M1642 808C1636 816 1628 819 1618 825C1598 837 1560 848 1516 850C1492 849 1466 842 1450 828L1425 760" fill="none" stroke="#1b2326" stroke-width="34" filter="url(#fb)" opacity=".85"/></g><polygon points="1390.400,546.100 1403.600,540.200 1425.400,537.500 1478.900,542.200 1414.200,548.100" fill="#2d383c"/><polygon points="1414.200,548.100 1478.900,542.200 1480.200,554.700 1426,560" fill="#566a6f"/><polygon points="1414.200,548.100 1426,560 1445,553" fill="#3a494e"/><polygon points="1391,546.100 1414.200,548.100 1426,560 1411.500,569.900 1389.100,565.900" fill="#4e6166"/><polygon points="1399.600,569.300 1411.500,569.900 1390.400,586.400 1387.100,587.100 1387.700,581.100" fill="#4b5e63"/><polygon points="1287,644.100 1295,637.300 1315.600,632.700 1319.100,647.600 1312.200,704.800 1287,707.100" fill="#f00000"/><polygon points="1284.700,646 1294,634.500 1316.500,629.800 1320.500,633 1315.600,632.700 1295,637.300 1287,644.100" fill="#4a5c61"/><polygon points="1287,707.100 1312.200,704.800 1319.100,647.600 1322,646 1315,712 1287,714" fill="#42535a"/><path d="M1328.300 627.600L1358 623.500" stroke="#4a5c61" stroke-width="3.600"/><path d="M1389.500 554.500L1356.500 573.500C1353.500 575.500 1352 577.500 1350 581L1288.200 697.900" fill="none" stroke="#485a5f" stroke-width="4.200"/><path d="M1285.900 677.300L1401.500 710.500" stroke="#4a5c61" stroke-width="5"/><polygon points="1287,714 1315,712 1340,730 1372,738 1375,722 1378,736 1284.700,737" fill="#36454a"/><polygon points="1285,733.500 1355,735.500 1372,738 1285,738" fill="#0a0e0f"/><path d="M1189 786V633C1189 623 1194 618.300 1203 618.300H1264C1277 618.300 1285.400 630 1285.400 648V736.700H1222L1222 800L1203.300 806Z" fill="url(#gwheel)"/><path d="M1189 786V633C1189 623 1194 618.300 1203 618.300H1264C1277 618.300 1285.400 630 1285.400 648V736.700H1189Z" fill="url(#gwheelv)"/><polygon points="1221.800,736.600 1425.500,735.500 1438.100,801.900 1240.100,807.600" fill="url(#gflap1)"/><polygon points="1240.100,807.600 1438.100,801.900 1457.600,837.300 1244.700,846.500" fill="url(#gflap2)"/><path d="M1240.100 807.800L1438.100 802.100" stroke="#5a6e73" stroke-width=".8"/><path d="M1244.700 846.500L1457.600 837.300L1473.400 845L1488.300 850.500L1500.500 847.700L1576.300 838.300L1592.600 846.400L1641.400 866.700L1600 875L1538.400 874L1514 863L1495 858L1244.700 865Z" fill="#000"/><path d="M1244.700 863.700L1495 856.500C1503 857 1508 858.500 1514 861.300C1524 866 1530 871 1538.400 872.100L1641.400 866.700C1652 868 1657.600 874 1659 884C1659.500 890 1657 895.500 1653.500 897.900L1551.900 902.600C1535 902.600 1527 899.200 1511.300 899.200L1244.700 908.800Z" fill="url(#gmain)"/><path d="M1538.400 872.100L1641.400 866.700C1650 868 1655 872 1657.600 878L1538.400 884Z" fill="url(#gblk)"/><path d="M1417.500 704.600C1432 722 1446.100 745.800 1456 772C1466 800 1472 825 1474.700 844.200L1457.600 837.300L1438.100 801.900L1425.500 736.600Z" fill="#283236"/><path d="M1417.500 704.600C1432 722 1446.100 745.800 1456 772C1466 800 1472 825 1474.700 844.200L1471.500 843C1468 822 1462 798 1453 774C1444 750 1431 724 1417.500 704.600Z" fill="#4c5f64"/><polygon points="1510.300,754.200 1515.400,758.100 1496.800,851 1489.800,849" fill="#485a5f"/><polygon points="1203.300,699.700 1221.700,705.900 1220.500,754 1219.300,818 1218,837.700 1203.300,840.200" fill="url(#gepl)"/><path d="M1221.700 705.900L1241.500 818L1243.900 827.900C1245 850 1245 900 1243.900 942.400C1232 943 1223 941 1218 936.500L1204.500 840.200L1219.300 837.700L1220.500 754Z" fill="#273034"/><path d="M1240.500 812L1243.900 827.900C1245 850 1245 900 1243.900 942.400L1240.200 942.600C1241.300 900 1241.300 850 1240.300 830Z" fill="#53666b"/><path d="M896.3 1055V1020" stroke="#7a7af5" stroke-width="1.3"/><path d="M896.3 1016.5L893.6 1021.5H899Z" fill="#7a7af5"/><path d="M896 1055.300H862" stroke="#3cb83c" stroke-width="1.4"/><path d="M857.500 1055.300L862.500 1052.600V1058Z" fill="#3cb83c"/><text x="896.5" y="1007.3" font-family="Liberation Sans, sans-serif" font-size="29" font-weight="bold" font-style="italic" fill="#7a7af5" textLength="17.5" lengthAdjust="spacingAndGlyphs">Z</text><text x="848.5" y="1055" font-family="Liberation Sans, sans-serif" font-size="29" font-weight="bold" font-style="italic" fill="#3cb83c" textLength="15" lengthAdjust="spacingAndGlyphs">Y</text><text x="886.5" y="1053" font-family="Liberation Sans, sans-serif" font-size="25" font-weight="bold" font-style="italic" fill="#e8141c" textLength="14" lengthAdjust="spacingAndGlyphs">X</text><path d="M896.3 1055V1037" stroke="#7a7af5" stroke-width="1.3"/></svg><div class="abs" style="left:1639px;top:117px;width:240px;height:96px;background:#cfd0d2;border:1px solid #a4cce0;border-radius:4px"></div><div class="ex" style="left:1652px;top:131.5px"></div><div class="t" style="left:1664.3px;top:125.39px;font-size:11px;color:#3d7a96;">Scene</div><div class="ex" style="left:1668px;top:150.5px"></div><div class="t" style="left:1680.3px;top:144.39px;font-size:11px;color:#3d7a96;">Model-Conf-3 mesh</div><div class="ex p" style="left:1684px;top:170.5px"></div><svg class="abs" style="left:1698px;top:169.5px" width="12" height="9" viewBox="0 0 13 9"><path d="M0.3 4.5C2.5 0.9 10.5 0.9 12.7 4.5C10.5 8.1 2.5 8.1 0.3 4.5Z" fill="none" stroke="#555" stroke-width="1.4"/><circle cx="6.5" cy="4.3" r="2.7" fill="#555"/></svg><div class="t" style="left:1714.4px;top:164.39px;font-size:11px;color:#2e6a9e;font-weight:bold;">region0</div><div class="ex p" style="left:1684px;top:190.5px"></div><svg class="abs" style="left:1698px;top:189.5px" width="12" height="9" viewBox="0 0 13 9"><path d="M0.3 4.5C2.5 0.9 10.5 0.9 12.7 4.5C10.5 8.1 2.5 8.1 0.3 4.5Z" fill="none" stroke="#555" stroke-width="1.4"/><circle cx="6.5" cy="4.3" r="2.7" fill="#555"/></svg><div class="t" style="left:1714.4px;top:184.39px;font-size:11px;color:#d2521e;font-weight:bold;">RadiatorZone</div><svg class="abs" style="left:1870px;top:203px" width="8" height="8" viewBox="0 0 8 8"><path d="M0.500 7.500L7.500 0.500M4 7.500L7.500 4" stroke="#444" stroke-width="0.9"/></svg><div class="abs" style="left:825px;top:1098px;width:200px;height:28px;background:#777c7d;border:1px solid #667f8a;border-radius:4px"></div><div class="t" style="left:834.3px;top:1101.99px;font-size:11px;color:#345a73;">region0</div><svg class="abs" style="left:1015px;top:1116px" width="8" height="8" viewBox="0 0 8 8"><path d="M0.500 7.500L7.500 0.500M4 7.500L7.500 4" stroke="#333" stroke-width="0.9"/></svg><div class="abs" style="left:1752px;top:1104px;width:137px;height:40px;background:#005e9c;border-top:1px solid #0070ba;border-radius:3px"></div><svg class="abs" style="left:1762px;top:1113px" width="24" height="17" viewBox="0 0 24 17"><ellipse cx="11.5" cy="7.800" rx="11.500" ry="7.800" fill="#fff"/><path d="M16 13L23 16.500L19 10Z" fill="#fff"/><rect x="5.500" y="4" width="12" height="8" rx="1" fill="#005e9b"/><rect x="13" y="2.800" width="3.500" height="2" fill="#005e9b"/><circle cx="11.500" cy="8" r="2.500" fill="#fff"/><circle cx="11.500" cy="8" r="1.300" fill="#005e9b"/></svg><div class="t" style="left:1796.4px;top:1111.97px;font-size:12.5px;color:#fff;"><span style="font-size:12.5px;letter-spacing:-0.318px;">Report an issue</span></div></body></html>
